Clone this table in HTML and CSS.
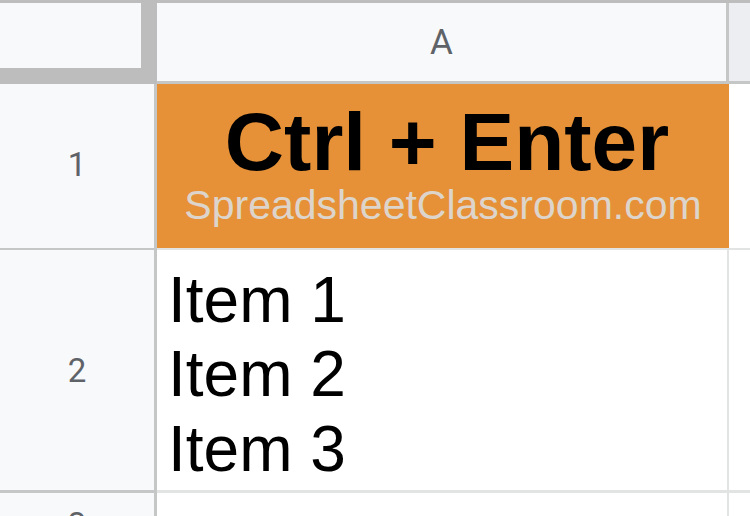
FILE: index.html
```html
<!DOCTYPE html>
<html>
<head>
<meta charset="utf-8">
<link rel="stylesheet" href="styles.css">
</head>
<body>
<div class="topline"></div>
<div class="sheet">
  <div class="corner"><div class="corner-box"></div></div>
  <div class="colhead">A</div>
  <div class="colhead colhead-next"></div>

  <div class="rowhead rh1">1</div>
  <div class="cell title">
    <div class="title-main">Ctrl + Enter</div>
    <div class="title-sub">SpreadsheetClassroom.com</div>
  </div>
  <div class="cell rest r1"></div>

  <div class="rowhead rh2">2</div>
  <div class="cell items r2">
    <div>Item 1</div>
    <div>Item 2</div>
    <div>Item 3</div>
  </div>
  <div class="cell rest r2"></div>

  <div class="rowhead rh3">3</div>
  <div class="cell r3"></div>
  <div class="cell rest"></div>
</div>
</body>
</html>
```

FILE: styles.css
```css
html, body {
  margin: 0;
  padding: 0;
  background: #ffffff;
  overflow: hidden;
}
body {
  width: 750px;
  height: 516px;
}
.topline {
  height: 3px;
  background: #bdbdbd;
}
.sheet {
  display: grid;
  grid-template-columns: 157px 572px 21px;
  grid-template-rows: 81px 166px 243px 23px;
  box-sizing: border-box;
}
.corner {
  background: #bdbdbd;
}
.corner-box {
  width: 141px;
  height: 65px;
  background: #f8f9fa;
}
.colhead {
  background: #f8f9fa;
  border-right: 3px solid #c4c7c5;
  border-bottom: 3px solid #c4c7c5;
  display: flex;
  align-items: center;
  justify-content: center;
  font-family: Roboto, "Liberation Sans", sans-serif;
  font-size: 35px;
  color: #5f6368;
  padding-top: 1px;
  box-sizing: border-box;
}
.colhead-next {
  background: #eceef1;
  border-right: none;
}
.rowhead {
  background: #f8f9fa;
  border-right: 3px solid #c4c7c5;
  display: flex;
  justify-content: center;
  font-family: Roboto, "Liberation Sans", sans-serif;
  font-size: 33px;
  color: #5f6368;
  box-sizing: border-box;
}
.rh1 {
  border-bottom: 2px solid #c4c7c5;
  align-items: center;
  padding-bottom: 3px;
}
.rh2 {
  border-bottom: 3px solid #c4c7c5;
  align-items: center;
}
.rh3 {
  align-items: flex-start;
  padding-top: 12px;
}
.cell {
  box-sizing: border-box;
  background: #ffffff;
}
.title {
  background: #e69138;
  border-bottom: 2px solid #e2e3e3;
  font-family: "Liberation Sans", Arial, sans-serif;
  text-align: center;
  padding-top: 20px;
}
.title-main {
  font-weight: bold;
  font-size: 82px;
  line-height: 76px;
  color: #000000;
  white-space: nowrap;
  padding-left: 8px;
}
.title-sub {
  margin-top: 7px;
  font-size: 41px;
  line-height: 36px;
  color: #ddd5cc;
  white-space: nowrap;
}
.r1 {
  border-bottom: 2px solid #e2e3e3;
}
.r2 {
  border-bottom: 3px solid #e2e3e3;
}
.items {
  border-right: 2px solid #e2e3e3;
  font-family: "Liberation Sans", Arial, sans-serif;
  font-size: 64px;
  line-height: 74.5px;
  color: #000000;
  padding-top: 12.6px;
  padding-left: 11px;
}
.r3 {
  border-right: 2px solid #e2e3e3;
}
```
